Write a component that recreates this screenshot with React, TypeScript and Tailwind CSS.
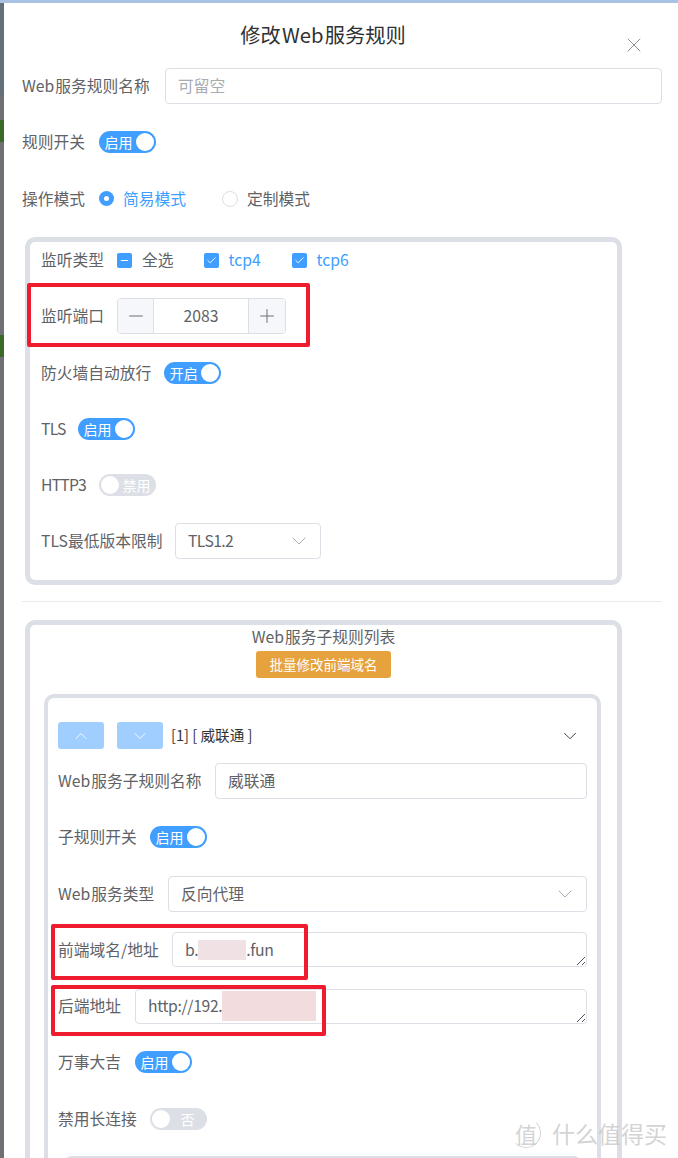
import { X, Minus, Plus, ChevronDown, ChevronUp, Check } from 'lucide-react';

const font = { fontFamily: '"Noto Sans CJK SC", "Noto Sans", sans-serif' };

function Switch({ on, label }: { on: boolean; label: string }) {
    return (
        <div className={`flex h-[22px] w-[57px] items-center rounded-full px-[2px] text-[14px] leading-none ${on ? 'bg-[#409eff] text-white' : 'flex-row-reverse bg-[#dcdfe6] text-white'}`}>
            <span className="flex-1 text-center">{label}</span>
            <span className="h-[18px] w-[18px] rounded-full bg-white" />
        </div>
    );
}

function Row({ label, labelClass = '', children }: { label: string; labelClass?: string; children: React.ReactNode }) {
    return (
        <div className="mb-[20.25px] flex h-9 items-center gap-[13px]">
            <span className={`shrink-0 whitespace-nowrap text-[#606266] ${labelClass}`}>{label}</span>
            {children}
        </div>
    );
}

function Field({ value, placeholder }: { value?: string; placeholder?: string }) {
    return (
        <div className="flex h-full flex-1 items-center rounded-[4px] border border-[#dcdfe6] px-3 text-[#606266]">
            {value ?? <span className="text-[#a8abb2]">{placeholder}</span>}
        </div>
    );
}

function Select({ value, className }: { value: React.ReactNode; className: string }) {
    return (
        <div className={`flex h-full items-center justify-between rounded-[4px] border border-[#dcdfe6] pl-3 pr-[9px] text-[#606266] ${className}`}>
            {value}
            <ChevronDown className="h-6 w-6 text-[#a8abb2]" strokeWidth={1} />
        </div>
    );
}

function Grip() {
    return (
        <svg className="absolute bottom-0 right-0 h-[10px] w-[10px]" viewBox="0 0 10 10" fill="none" stroke="#555" strokeWidth="1">
            <path d="M1 9 9 1M6 9 9 6" />
        </svg>
    );
}

function Area({ children }: { children: React.ReactNode }) {
    return (
        <div className="relative flex h-[35px] flex-1 items-center rounded-[4px] border border-[#dcdfe6] px-3 tracking-[-0.35px] text-[#606266]">
            {children}
            <Grip />
        </div>
    );
}

function Box({ children }: { children: React.ReactNode }) {
    return <div className="flex h-[15px] w-[15px] items-center justify-center rounded-[2px] bg-[#409eff]">{children}</div>;
}

function App() {
    return (
        <div style={font} className="relative flex h-[1158px] w-[678px] overflow-hidden bg-white text-[15.75px]">
            {/* dimmed page showing at the left edge */}
            <div className="flex w-[4px] shrink-0 flex-col bg-[#6e7074]">
                <div className="h-[3px] bg-[#a9c1e2]" />
                <div className="h-[92px] bg-[#647079]" />
                <div className="mt-[25px] h-[22px] bg-[#3d6b27]" />
                <div className="mt-[193px] h-[22px] bg-[#3d6b27]" />
            </div>

            <div className="flex-1">
                <div className="h-[3px] bg-[#a9c1e2]" />

                <div className="pl-[18px] pr-4">
                    <div className="flex h-[65px] items-center">
                        <div className="flex-1 text-center text-[20.25px] text-[#303133]">修改&#8202;Web&#8202;服务规则</div>
                        <div className="w-[38px] pt-[19px]">
                            <X className="-ml-[2px] h-6 w-6 text-[#909399]" strokeWidth={1} />
                        </div>
                    </div>

                    <Row label="Web&#8202;服务规则名称" labelClass="w-[130px]">
                        <Field placeholder="可留空" />
                    </Row>
                    <Row label="规则开关" labelClass="w-[64px]">
                        <Switch on label="启用" />
                    </Row>
                    <Row label="操作模式" labelClass="w-[64px]">
                        <div className="flex items-center text-[#409eff]">
                            <span className="flex h-[15px] w-[15px] items-center justify-center rounded-full bg-[#409eff]">
                                <span className="h-[5px] w-[5px] rounded-full bg-white" />
                            </span>
                            <span className="ml-[9px]">简易模式</span>
                        </div>
                        <div className="ml-[23px] flex items-center text-[#606266]">
                            <span className="h-[16px] w-[16px] rounded-full border border-[#dcdfe6]" />
                            <span className="ml-[9px]">定制模式</span>
                        </div>
                    </Row>

                    <div className="ml-[3px] mt-[20.5px] w-[597px] rounded-[10px] border-[5px] border-[#dcdfe6] pl-[11px]">
                        <Row label="监听类型">
                            <div className="flex items-center text-[#606266]">
                                <Box><Minus className="h-[11px] w-[11px] text-white" strokeWidth={2.5} /></Box>
                                <span className="ml-[10px]">全选</span>
                            </div>
                            <div className="ml-[17px] flex items-center text-[#409eff]">
                                <Box><Check className="h-[11px] w-[11px] text-white" strokeWidth={2} /></Box>
                                <span className="ml-[10px] w-[30px]">tcp4</span>
                            </div>
                            <div className="ml-[20px] flex items-center text-[#409eff]">
                                <Box><Check className="h-[11px] w-[11px] text-white" strokeWidth={2} /></Box>
                                <span className="ml-[10px]">tcp6</span>
                            </div>
                        </Row>
                        <Row label="监听端口">
                            <div className="flex h-full w-[169px] rounded-[4px] border border-[#dcdfe6] text-[#606266]">
                                <div className="flex w-[36px] items-center justify-center rounded-l-[4px] border-r border-[#dcdfe6] bg-[#f5f7fa]">
                                    <Minus className="h-[22px] w-[22px]" strokeWidth={1} />
                                </div>
                                <div className="flex flex-1 items-center justify-center">2083</div>
                                <div className="flex w-[37px] items-center justify-center rounded-r-[4px] border-l border-[#dcdfe6] bg-[#f5f7fa]">
                                    <Plus className="h-[22px] w-[22px]" strokeWidth={1} />
                                </div>
                            </div>
                        </Row>
                        <Row label="防火墙自动放行">
                            <Switch on label="开启" />
                        </Row>
                        <Row label="TLS" labelClass="w-[24px] tracking-[-0.8px]">
                            <Switch on label="启用" />
                        </Row>
                        <Row label="HTTP3" labelClass="w-[45px] tracking-[-0.8px]">
                            <Switch on={false} label="禁用" />
                        </Row>
                        <Row label="TLS最低版本限制" labelClass="w-[121px]">
                            <Select value={<span className="tracking-[-0.6px]">TLS1.2</span>} className="w-[146px]" />
                        </Row>
                    </div>

                    <div className="mb-[18px] mt-[16.5px] h-px bg-[#e8eaef]" />

                    <div className="ml-[3px] w-[597px] rounded-t-[10px] border-[5px] border-b-0 border-[#dcdfe6]">
                        <div className="h-[25px] text-center leading-[24px] text-[#606266]">Web&#8202;服务子规则列表</div>
                        <div className="mt-[1px] flex justify-center">
                            <div className="flex h-[27px] w-[135px] items-center justify-center rounded-[3px] bg-[#e6a23c] text-[13.5px] text-white">批量修改前端域名</div>
                        </div>

                        <div className="ml-[14px] mt-4 w-[557px] rounded-t-[10px] border-[4px] border-b-0 border-[#dcdfe6] px-[10px] pt-6">
                            <div className="mb-[14px] flex h-[27px] items-center">
                                <div className="flex h-full w-[46px] items-center justify-center rounded-[3px] bg-[#a0cfff]">
                                    <ChevronUp className="h-5 w-5 text-white" strokeWidth={1} />
                                </div>
                                <div className="ml-[13px] flex h-full w-[46px] items-center justify-center rounded-[3px] bg-[#a0cfff]">
                                    <ChevronDown className="h-5 w-5 text-white" strokeWidth={1} />
                                </div>
                                <span className="ml-2 flex-1 pb-[2px] text-[14.625px] text-[#303133]">[1] [ 威联通 ]</span>
                                <ChevronDown className="mr-[6px] h-[22px] w-[22px] text-[#303133]" strokeWidth={1} />
                            </div>

                            <Row label="Web&#8202;服务子规则名称" labelClass="w-[144px]">
                                <Field value="威联通" />
                            </Row>
                            <Row label="子规则开关" labelClass="w-[79px]">
                                <Switch on label="启用" />
                            </Row>
                            <Row label="Web&#8202;服务类型" labelClass="w-[97px]">
                                <Select value="反向代理" className="flex-1" />
                            </Row>
                            <Row label="前端域名/地址" labelClass="w-[101px]">
                                <Area>b.<span className="h-[20px] w-[48px] bg-[#f0e2e4]" />.fun</Area>
                            </Row>
                            <Row label="后端地址" labelClass="w-[64px]">
                                <Area>http://192.<span className="h-[30px] w-[94px] bg-[#f2dcde]" /></Area>
                            </Row>
                            <Row label="万事大吉" labelClass="w-[64px]">
                                <Switch on label="启用" />
                            </Row>
                            <Row label="禁用长连接" labelClass="w-[79px]">
                                <Switch on={false} label="否" />
                            </Row>

                            <div className="mx-[7px] -mt-px h-10 rounded-t-[6px] border-[4px] border-b-0 border-[#dcdfe6]" />
                        </div>
                    </div>
                </div>
            </div>

            {/* red annotation boxes */}
            <div className="absolute left-[27px] top-[283px] h-[64px] w-[283px] rounded-[2px] border-[4px] border-[#ee1c2e]" />
            <div className="absolute left-[51px] top-[924px] h-[56px] w-[257px] rounded-[2px] border-[4px] border-[#ee1c2e]" />
            <div className="absolute left-[51px] top-[985px] h-[51px] w-[275px] rounded-[2px] border-[4px] border-[#ee1c2e]" />

            {/* watermark */}
            <div className="absolute left-[511px] top-[1118px] flex items-center whitespace-nowrap text-[#c8c8c8]/80">
                <span className="flex h-[30px] w-[30px] items-center justify-center rounded-full border border-[#d4d4d4] border-l-transparent border-t-transparent text-[22px] leading-none">值</span>
                <span className="ml-[11px] text-[23px] leading-none">什么值得买</span>
            </div>
        </div>
    );
}

export default App;
